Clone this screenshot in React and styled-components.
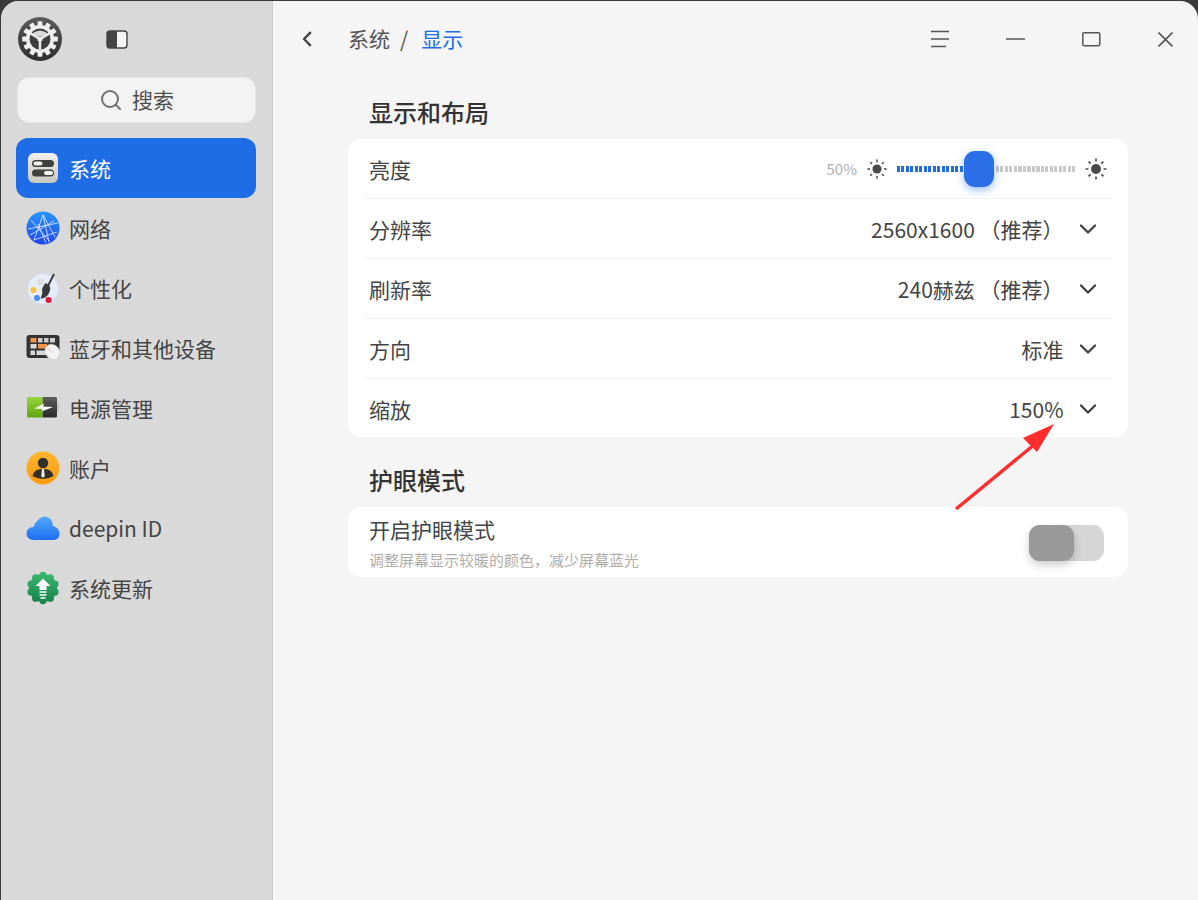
import React from "react";
import styled, { createGlobalStyle } from "styled-components";
import { ChevronDown, Search } from "lucide-react";

const Global = createGlobalStyle`
  html, body { margin: 0; padding: 0; background: #333; }
  body { font-family: "Noto Sans CJK SC", "Noto Sans", sans-serif; overflow: hidden; }
  * { box-sizing: border-box; }
`;

const Screen = styled.div`
  position: relative;
  width: 1198px;
  height: 900px;
  background: #3a3a3a;
  padding: 1px 0 0 1px;
`;
const Window = styled.div`
  display: flex;
  width: 1197px;
  height: 899px;
  border-radius: 18px 18px 0 0;
  overflow: hidden;
  background: #f5f5f5;
`;
const Sidebar = styled.aside`
  width: 272px;
  flex: none;
  background: #d9d9d9;
  border-right: 1px solid #cfcfcf;
  padding: 15px 16px 0 15px;
  display: flex;
  flex-direction: column;
`;
const TopRow = styled.div`
  display: flex;
  align-items: center;
  gap: 43px;
  height: 46px;
  padding-left: 1px;
`;
const SearchBox = styled.div`
  margin: 15px 0 0 1px;
  height: 46px;
  width: 239px;
  border-radius: 12px;
  background: #f3f3f3;
  border: 1px solid #e6e6e6;
  display: flex;
  align-items: center;
  justify-content: center;
  gap: 9px;
  font-size: 21px;
  color: #4d4d4d;
  padding-bottom: 3px;
`;
const SearchIcon = styled(Search)`
  margin-top: 3px;
`;
const Nav = styled.nav`
  margin-top: 15px;
  display: flex;
  flex-direction: column;
`;
const NavItem = styled.div`
  height: 60px;
  width: 240px;
  border-radius: 12px;
  display: flex;
  align-items: center;
  gap: 9px;
  padding: 0 10px;
  font-size: 21px;
  line-height: 30px;
  color: ${(p) => (p.$active ? "#ffffff" : "#444444")};
  background: ${(p) => (p.$active ? "#1f6de6" : "transparent")};
`;
const NavIcon = styled.svg`
  width: 34px;
  height: 34px;
  flex: none;
`;
const Main = styled.main`
  flex: 1;
  display: flex;
  flex-direction: column;
  min-width: 0;
`;
const TitleBar = styled.header`
  height: 76px;
  flex: none;
  display: flex;
  align-items: center;
  padding: 0 25px 0 29px;
  color: #444;
`;
const Crumbs = styled.div`
  display: flex;
  align-items: center;
  margin-left: 36px;
  padding-bottom: 3px;
  font-size: 21px;
  color: #555;
  gap: 10px;
`;
const CrumbCurrent = styled.span`
  color: #1f6de6;
  margin-left: 3px;
`;
const TitleButtons = styled.div`
  margin-left: auto;
  display: flex;
  align-items: center;
  gap: 57px;
  color: #555;
`;
const Content = styled.div`
  width: 780px;
  margin-left: 75px;
  padding-top: 17px;
`;
const SectionTitle = styled.h2`
  margin: 0;
  padding-left: 21px;
  font-size: 24px;
  line-height: 36px;
  font-weight: 500;
  color: #333;
`;
const Card = styled.section`
  margin: 9px 0 25px;
  background: #fff;
  border-radius: 14px;
  padding: 0 16px;
`;
const Row = styled.div`
  height: ${(p) => (p.$last ? "58px" : "60px")};
  display: flex;
  align-items: center;
  padding: ${(p) => (p.$last ? "1px 5px 0" : "0 5px")};
  font-size: 21px;
  color: #444;
  border-bottom: ${(p) => (p.$last ? "none" : "1px solid #f1f1f1")};
`;
const RowValue = styled.span`
  margin-left: auto;
  color: #444;
  white-space: pre;
`;
const Chevron = styled(ChevronDown)`
  margin: 1px 5px 0 10.5px;
  color: #3d3d3d;
`;
const Percent = styled.span`
  margin-left: auto;
  font-size: 15px;
  color: #b0b0b0;
`;
const SliderWrap = styled.div`
  display: flex;
  align-items: center;
  gap: 8px;
  margin-left: 9px;
  margin-right: -1px;
`;
const Track = styled.div`
  position: relative;
  width: 179px;
  height: 6px;
  margin-left: 1px;
  background: repeating-linear-gradient(90deg, #c9c9c9 0 3px, transparent 3px 4.5px);
`;
const TrackFill = styled.div`
  height: 100%;
  background: repeating-linear-gradient(90deg, #1f6de6 0 3px, transparent 3px 4.5px);
`;
const Thumb = styled.div`
  position: absolute;
  top: -15px;
  left: 67px;
  width: 30px;
  height: 36px;
  border-radius: 11px;
  background: #2a6fe8;
  box-shadow: 0 3px 8px rgba(31, 109, 230, 0.45);
`;
const EyeText = styled.div`
  display: flex;
  flex-direction: column;
`;
const EyeTitle = styled.div`
  font-size: 21px;
  line-height: 30px;
  color: #444;
`;
const EyeHint = styled.div`
  font-size: 15px;
  line-height: 22px;
  margin-top: 5px;
  color: #b0aca8;
`;
const EyeRow = styled.div`
  height: 70px;
  display: flex;
  align-items: center;
  padding: 0 8px 0 5px;
`;
const Toggle = styled.div`
  margin: 2px 0 0 auto;
  width: 75px;
  height: 36px;
  border-radius: 11px;
  background: #d6d6d6;
`;
const ToggleKnob = styled.div`
  width: 45px;
  height: 36px;
  border-radius: 11px;
  background: #999;
  box-shadow: 0 4px 8px rgba(0, 0, 0, 0.2);
`;
const Annotation = styled.svg`
  position: absolute;
  left: 950px;
  top: 420px;
  width: 110px;
  height: 95px;
`;

const gearTeeth = Array.from({ length: 12 }, (_, i) => i * 30);
const Gear = () => (
  <svg width="46" height="46" viewBox="0 0 46 46">
    <defs>
      <linearGradient id="gearbg" x1="0" y1="0" x2="0" y2="1">
        <stop offset="0" stopColor="#5a5a5a" />
        <stop offset="1" stopColor="#2e2e2e" />
      </linearGradient>
    </defs>
    <circle cx="23" cy="23" r="22" fill="url(#gearbg)" />
    {gearTeeth.map((a) => (
      <rect key={a} x="20.6" y="5.2" width="4.8" height="6" rx="0.8" fill="#eeeeee" transform={`rotate(${a} 23 23)`} />
    ))}
    <circle cx="23" cy="23" r="14" fill="#eeeeee" />
    <circle cx="23" cy="23" r="10.5" fill="#3d3d3d" />
    <path d="M14.5 18 Q23 11 31.5 18 Q27 20.5 23 20.5 Q19 20.5 14.5 18Z" fill="#d8d8d8" />
    <path d="M23 23 V33.5 M23 23 L13.5 17.5 M23 23 L32.5 17.5" stroke="#eeeeee" strokeWidth="2.4" />
    <circle cx="23" cy="23" r="2.6" fill="#eeeeee" />
  </svg>
);
const PanelIcon = () => (
  <svg width="22" height="19" viewBox="0 0 22 19">
    <rect x="1" y="1" width="20" height="17" rx="3" fill="#f4f4f4" stroke="#444" strokeWidth="1.4" />
    <path d="M4 1 H11 V18 H4 A3 3 0 0 1 1 15 V4 A3 3 0 0 1 4 1Z" fill="#444" />
  </svg>
);
const SystemIcon = () => (
  <NavIcon viewBox="0 0 34 34">
    <defs>
      <linearGradient id="sysbg" x1="0" y1="0" x2="0" y2="1">
        <stop offset="0" stopColor="#f2f0ec" />
        <stop offset="1" stopColor="#c9c6bf" />
      </linearGradient>
    </defs>
    <rect x="2" y="2" width="30" height="30" rx="6" fill="url(#sysbg)" />
    <rect x="6" y="9" width="22" height="7" rx="3.5" fill="#3f3f3f" />
    <rect x="6" y="18.5" width="22" height="7" rx="3.5" fill="#3f3f3f" />
    <rect x="7.5" y="10.5" width="9" height="4" rx="2" fill="#f5f5f5" />
    <rect x="18" y="20" width="9" height="4" rx="2" fill="#f5f5f5" />
  </NavIcon>
);
const NetIcon = () => (
  <NavIcon viewBox="0 0 34 34">
    <defs>
      <linearGradient id="netbg" x1="0" y1="0" x2="0" y2="1">
        <stop offset="0" stopColor="#2b96fb" />
        <stop offset="1" stopColor="#1c46ea" />
      </linearGradient>
    </defs>
    <circle cx="17" cy="17" r="16.5" fill="url(#netbg)" />
    <path d="M17 4 L8 29 M17 4 L29 26 M17 4 L23 31 M2 18 L32 12 M4 24 L28 10 M8 29 L31 21 M5 9 L24 31 M12 13 L20 32" stroke="#e6efff" strokeWidth="0.8" fill="none" />
  </NavIcon>
);
const PaletteIcon = () => (
  <NavIcon viewBox="0 0 34 34">
    <circle cx="17" cy="18" r="15.5" fill="#e6edf8" stroke="#cfdcf2" />
    <circle cx="14.5" cy="11" r="3.2" fill="#dcdcdc" />
    <circle cx="7.5" cy="19" r="3" fill="#f7c33a" />
    <circle cx="11" cy="27" r="3" fill="#4a8df0" />
    <circle cx="22.5" cy="29" r="3" fill="#e0173f" />
    <path d="M28 3 L22 15" stroke="#333" strokeWidth="1.8" />
    <path d="M20 12 Q26 15 23.5 21 Q20.5 28 14.5 27.5 Q17 22 16 19 Q17 14 20 12Z" fill="#3a3a3a" />
  </NavIcon>
);
const DevicesIcon = () => (
  <NavIcon viewBox="0 0 34 34">
    <rect x="0.5" y="4" width="33" height="23" rx="3" fill="#333" />
    <rect x="4.5" y="7" width="6" height="4.5" fill="#f2934a" />
    <rect x="12" y="7" width="4.5" height="4.5" fill="#cfcfcf" />
    <rect x="18" y="7" width="4.5" height="4.5" fill="#cfcfcf" />
    <rect x="24" y="7" width="5" height="4.5" fill="#cfcfcf" />
    <rect x="4.5" y="13" width="6" height="4.5" fill="#d9d9d9" />
    <rect x="12" y="13" width="9" height="4.5" fill="#f2934a" />
    <rect x="4.5" y="19.5" width="4.5" height="4.5" fill="#d9d9d9" />
    <rect x="10.5" y="19.5" width="11" height="4.5" fill="#d9d9d9" />
    <ellipse cx="26.5" cy="21" rx="7" ry="8.2" fill="#f2f2f2" stroke="#cccccc" strokeWidth="0.6" transform="rotate(-40 26.5 21)" />
    <path d="M21 16.5 L26.5 21.5" stroke="#bbbbbb" strokeWidth="0.8" />
  </NavIcon>
);
const PowerIcon = () => (
  <NavIcon viewBox="0 0 34 34">
    <defs>
      <linearGradient id="powgreen" x1="0" y1="0" x2="0" y2="1">
        <stop offset="0" stopColor="#9ad63a" />
        <stop offset="1" stopColor="#5ea510" />
      </linearGradient>
      <linearGradient id="powdark" x1="0" y1="0" x2="0" y2="1">
        <stop offset="0" stopColor="#5c5c5c" />
        <stop offset="1" stopColor="#2a2a2a" />
      </linearGradient>
    </defs>
    <path d="M2.5 6 H16.7 V26.5 H2.5 A1.5 1.5 0 0 1 1 25 V7.5 A1.5 1.5 0 0 1 2.5 6Z" fill="url(#powgreen)" />
    <path d="M16.7 6 H29.5 A1.5 1.5 0 0 1 31 7.5 V25 A1.5 1.5 0 0 1 29.5 26.5 H16.7Z" fill="url(#powdark)" />
    <rect x="31" y="12" width="2" height="8.5" fill="#c4c4c4" />
    <path d="M8 17.5 L18.5 12.5 L17 15.5 L27 16 L15.5 20.5 L17 18 Z" fill="#ffffff" />
  </NavIcon>
);
const AccountIcon = () => (
  <NavIcon viewBox="0 0 34 34">
    <defs>
      <linearGradient id="accbg" x1="0" y1="0" x2="0" y2="1">
        <stop offset="0" stopColor="#ffb52e" />
        <stop offset="1" stopColor="#f99a10" />
      </linearGradient>
    </defs>
    <circle cx="17" cy="17" r="16.5" fill="url(#accbg)" stroke="#f5c36c" strokeWidth="0.6" />
    <circle cx="17" cy="12" r="5.2" fill="#33302c" />
    <path d="M6.5 25 Q8 18.5 14.5 18 L19.5 18 Q26 18.5 27.5 25 Q17 31 6.5 25Z" fill="#33302c" />
    <path d="M16 18 L18 18 L18.8 25 L17 27 L15.2 25Z" fill="#eee" />
  </NavIcon>
);
const CloudIcon = () => (
  <NavIcon viewBox="0 0 34 34">
    <defs>
      <linearGradient id="cloudbg" x1="0" y1="0" x2="0" y2="1">
        <stop offset="0" stopColor="#52a8ff" />
        <stop offset="1" stopColor="#1f6df0" />
      </linearGradient>
    </defs>
    <path d="M8 29 Q0.5 29 0.5 22.5 Q0.5 16.5 7.5 16 Q10 8 18 5.5 Q26.5 6 27 15 Q33.5 17 33.5 23 Q33 29 27 29Z" fill="url(#cloudbg)" />
  </NavIcon>
);
const updateBumps = Array.from({ length: 10 }, (_, i) => i * 36);
const UpdateIcon = () => (
  <NavIcon viewBox="0 0 34 34">
    <defs>
      <linearGradient id="updbg" gradientUnits="userSpaceOnUse" x1="0" y1="1" x2="0" y2="33">
        <stop offset="0" stopColor="#3cb970" />
        <stop offset="1" stopColor="#16824a" />
      </linearGradient>
    </defs>
    <g fill="url(#updbg)">
      <circle cx="17" cy="17" r="14" />
      {updateBumps.map((a) => {
        const r = (a * Math.PI) / 180;
        return <circle key={a} cx={17 + 12.6 * Math.sin(r)} cy={17 - 12.6 * Math.cos(r)} r="3.6" />;
      })}
    </g>
    <path d="M17 7.5 L24.5 15 H20.5 V19 H13.5 V15 H9.5Z" fill="#fff" />
    <path d="M13.5 21 H20.5 M13.5 24 H20.5 M14.5 27 H19.5" stroke="#fff" strokeWidth="1.5" />
  </NavIcon>
);
const Sun = ({ size }) => (
  <svg width={size} height={size} viewBox="0 0 24 24" fill="none">
    <circle cx="12" cy="12" r="5" fill="#4a4a4a" />
    <path d="M12 1.5 V4.5 M12 19.5 V22.5 M1.5 12 H4.5 M19.5 12 H22.5 M4.6 4.6 L6.6 6.6 M17.4 17.4 L19.4 19.4 M4.6 19.4 L6.6 17.4 M17.4 6.6 L19.4 4.6" stroke="#4a4a4a" strokeWidth="1.6" />
  </svg>
);
const BackIcon = () => (
  <svg width="10" height="16" viewBox="0 0 10 16" fill="none">
    <path d="M8.8 1.2 L2 8 L8.8 14.8" stroke="#444" strokeWidth="2.4" strokeLinejoin="round" />
  </svg>
);
const MenuIcon = () => (
  <svg width="18" height="18" viewBox="0 0 18 18">
    <path d="M0 1.5 H18 M0 9 H18 M0 16.5 H15" stroke="#555" strokeWidth="1.5" />
  </svg>
);
const MinIcon = () => (
  <svg width="19" height="4" viewBox="0 0 19 4">
    <path d="M0 2 H19" stroke="#555" strokeWidth="1.5" />
  </svg>
);
const MaxIcon = () => (
  <svg width="19" height="15" viewBox="0 0 19 15">
    <rect x="0.8" y="0.8" width="17" height="13" rx="1.5" fill="none" stroke="#555" strokeWidth="1.5" />
  </svg>
);
const CloseIcon = () => (
  <svg width="15" height="15" viewBox="0 0 15 15">
    <path d="M0.5 0.5 L14.5 14.5 M14.5 0.5 L0.5 14.5" stroke="#555" strokeWidth="1.6" />
  </svg>
);

const navItems = [
  ["系统", SystemIcon],
  ["网络", NetIcon],
  ["个性化", PaletteIcon],
  ["蓝牙和其他设备", DevicesIcon],
  ["电源管理", PowerIcon],
  ["账户", AccountIcon],
  ["deepin ID", CloudIcon],
  ["系统更新", UpdateIcon],
];

const rows = [
  ["分辨率", "2560x1600 （推荐）"],
  ["刷新率", "240赫兹 （推荐）"],
  ["方向", "标准"],
  ["缩放", "150%"],
];

export default function App() {
  return (
    <Screen>
      <Global />
      <Window>
        <Sidebar>
          <TopRow>
            <Gear />
            <PanelIcon />
          </TopRow>
          <SearchBox>
            <SearchIcon size={24} color="#707070" strokeWidth={2} />
            搜索
          </SearchBox>
          <Nav>
            {navItems.map(([label, Icon], i) => (
              <NavItem key={label} $active={i === 0}>
                <Icon />
                {label}
              </NavItem>
            ))}
          </Nav>
        </Sidebar>
        <Main>
          <TitleBar>
            <BackIcon />
            <Crumbs>
              <span>系统</span>
              <span>/</span>
              <CrumbCurrent>显示</CrumbCurrent>
            </Crumbs>
            <TitleButtons>
              <MenuIcon />
              <MinIcon />
              <MaxIcon />
              <CloseIcon />
            </TitleButtons>
          </TitleBar>
          <Content>
            <SectionTitle>显示和布局</SectionTitle>
            <Card>
              <Row>
                亮度
                <Percent>50%</Percent>
                <SliderWrap>
                  <Sun size={22} />
                  <Track>
                    <TrackFill style={{ width: "48%" }} />
                    <Thumb />
                  </Track>
                  <Sun size={24} />
                </SliderWrap>
              </Row>
              {rows.map(([label, value], i) => (
                <Row key={label} $last={i === rows.length - 1}>
                  {label}
                  <RowValue>{value}</RowValue>
                  <Chevron size={28} strokeWidth={1.9} />
                </Row>
              ))}
            </Card>
            <SectionTitle>护眼模式</SectionTitle>
            <Card>
              <EyeRow>
                <EyeText>
                  <EyeTitle>开启护眼模式</EyeTitle>
                  <EyeHint>调整屏幕显示较暖的颜色，减少屏幕蓝光</EyeHint>
                </EyeText>
                <Toggle>
                  <ToggleKnob />
                </Toggle>
              </EyeRow>
            </Card>
          </Content>
        </Main>
      </Window>
      <Annotation viewBox="0 0 110 95">
        <path d="M6 89 L85 24" stroke="#ff2d2d" strokeWidth="3.4" />
        <path d="M104 4 L73 18 L87 32 Z" fill="#ff2d2d" />
      </Annotation>
    </Screen>
  );
}
